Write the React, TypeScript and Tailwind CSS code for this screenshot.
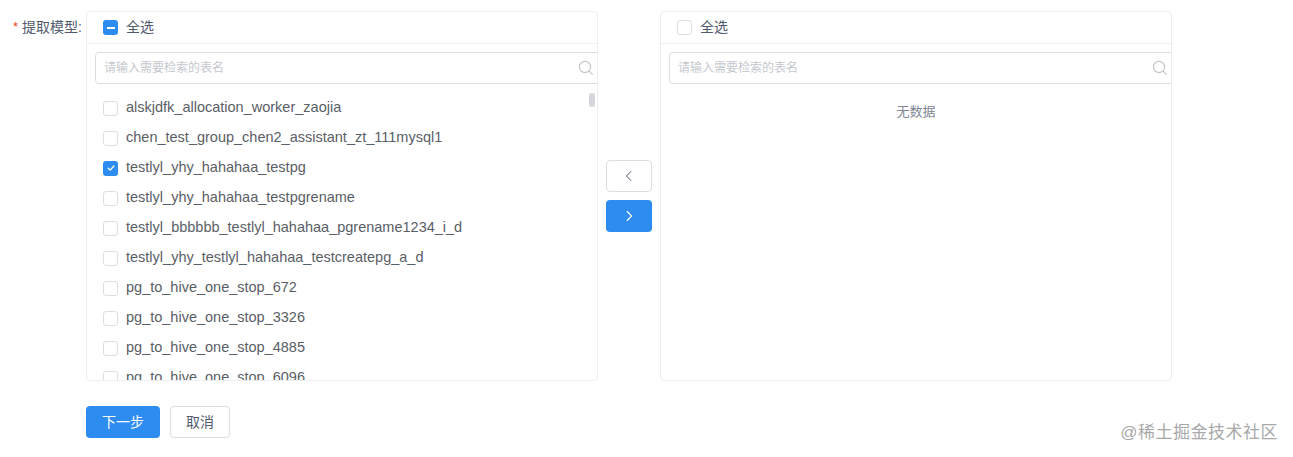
import { useState } from "react";

const leftItems = [
  "alskjdfk_allocation_worker_zaojia",
  "chen_test_group_chen2_assistant_zt_111mysql1",
  "testlyl_yhy_hahahaa_testpg",
  "testlyl_yhy_hahahaa_testpgrename",
  "testlyl_bbbbbb_testlyl_hahahaa_pgrename1234_i_d",
  "testlyl_yhy_testlyl_hahahaa_testcreatepg_a_d",
  "pg_to_hive_one_stop_672",
  "pg_to_hive_one_stop_3326",
  "pg_to_hive_one_stop_4885",
  "pg_to_hive_one_stop_6096",
];

function Checkbox({ state }: { state: "off" | "on" | "half" }) {
  if (state === "off") {
    return <span className="w-[15px] h-[15px] shrink-0 rounded-[3px] border border-[#dcdee2] bg-white" />;
  }
  return (
    <span className="w-[15px] h-[15px] shrink-0 rounded-[3px] bg-[#2d8cf0] flex items-center justify-center">
      {state === "half" ? (
        <span className="w-[8px] h-[2px] bg-white" />
      ) : (
        <svg width="10" height="10" viewBox="0 0 10 10" fill="none">
          <path d="M2.2 5.2 L4.2 7.1 L7.9 3" stroke="white" strokeWidth="1.3" strokeLinecap="round" strokeLinejoin="round" />
        </svg>
      )}
    </span>
  );
}

function SearchBox() {
  return (
    <div className="px-[8px] pt-[8px]">
      <div className="h-[32px] w-[calc(100%+12px)] border border-[#dcdee2] rounded-[4px] flex items-center pl-[8px] pr-[6px]">
        <span className="flex-1 text-[12px] text-[#c5c8ce]">请输入需要检索的表名</span>
        <svg width="16" height="16" viewBox="0 0 16 16" fill="none">
          <circle cx="7" cy="7" r="5.6" stroke="#c5c8ce" strokeWidth="1.2" />
          <path d="M11.2 11.2 L14.3 14.3" stroke="#c5c8ce" strokeWidth="1.2" strokeLinecap="round" />
        </svg>
      </div>
    </div>
  );
}

function Panel({ children, header }: { children: React.ReactNode; header: "off" | "half" }) {
  return (
    <div className="relative w-[512px] h-[370px] border border-[#eceef1] rounded-[4px] overflow-hidden bg-white">
      <div className="h-[32px] border-b border-[#eceef1] flex items-center gap-[8px] pl-[16px] text-[14px] text-[#515a6e]">
        <Checkbox state={header} />
        <span>全选</span>
      </div>
      <SearchBox />
      {children}
    </div>
  );
}

export default function App() {
  const [checked] = useState<number[]>([2]);

  return (
    <main
      className="relative w-[1293px] h-[457px] bg-white pt-[11px]"
      style={{ fontFamily: '"Liberation Sans", "Noto Sans CJK SC", sans-serif' }}
    >
      <div className="flex">
        <div className="w-[86px] h-[32px] flex items-center justify-end pr-[4px] text-[14px] text-[#515a6e]">
          <span className="text-[#ed4014] mr-[4px] text-[13px]">*</span>
          <span>提取模型:</span>
        </div>

        <Panel header="half">
          <div className="pt-[9px]">
            {leftItems.map((name, i) => (
              <div key={name} className="h-[30px] flex items-center gap-[8px] pl-[16px] text-[14.5px] text-[#5a5e66] whitespace-nowrap">
                <Checkbox state={checked.includes(i) ? "on" : "off"} />
                <span>{name}</span>
              </div>
            ))}
          </div>
          <div className="absolute right-[2px] top-[81px] w-[6px] h-[14px] rounded-full bg-[#d4d6da]" />
        </Panel>

        <div className="w-[62px] flex flex-col items-center justify-center gap-[8px]">
          <button type="button" className="w-[46px] h-[32px] rounded-[4px] border border-[#dcdee2] bg-white flex items-center justify-center">
            <svg width="12" height="12" viewBox="0 0 12 12" fill="none">
              <path d="M7.8 1.5 L3.4 6 L7.8 10.5" stroke="#515a6e" strokeWidth="1" strokeLinecap="round" strokeLinejoin="round" />
            </svg>
          </button>
          <button type="button" className="w-[46px] h-[32px] rounded-[4px] bg-[#2d8cf0] flex items-center justify-center">
            <svg width="12" height="12" viewBox="0 0 12 12" fill="none">
              <path d="M4.2 1.5 L8.6 6 L4.2 10.5" stroke="white" strokeWidth="1.1" strokeLinecap="round" strokeLinejoin="round" />
            </svg>
          </button>
        </div>

        <Panel header="off">
          <div className="pt-[18px] text-center text-[13px] text-[#808695]">无数据</div>
        </Panel>
      </div>

      <div className="flex gap-[10px] pl-[86px] mt-[25px]">
        <button type="button" className="w-[74px] h-[32px] rounded-[4px] bg-[#2d8cf0] text-white text-[14px]">
          下一步
        </button>
        <button type="button" className="w-[60px] h-[32px] rounded-[4px] border border-[#dcdee2] bg-white text-[#515a6e] text-[14px]">
          取消
        </button>
      </div>

      <div className="absolute right-[15px] bottom-[12px] text-[17px] text-[#a8a8a8] tracking-[0.5px]">
        @稀土掘金技术社区
      </div>
    </main>
  );
}
